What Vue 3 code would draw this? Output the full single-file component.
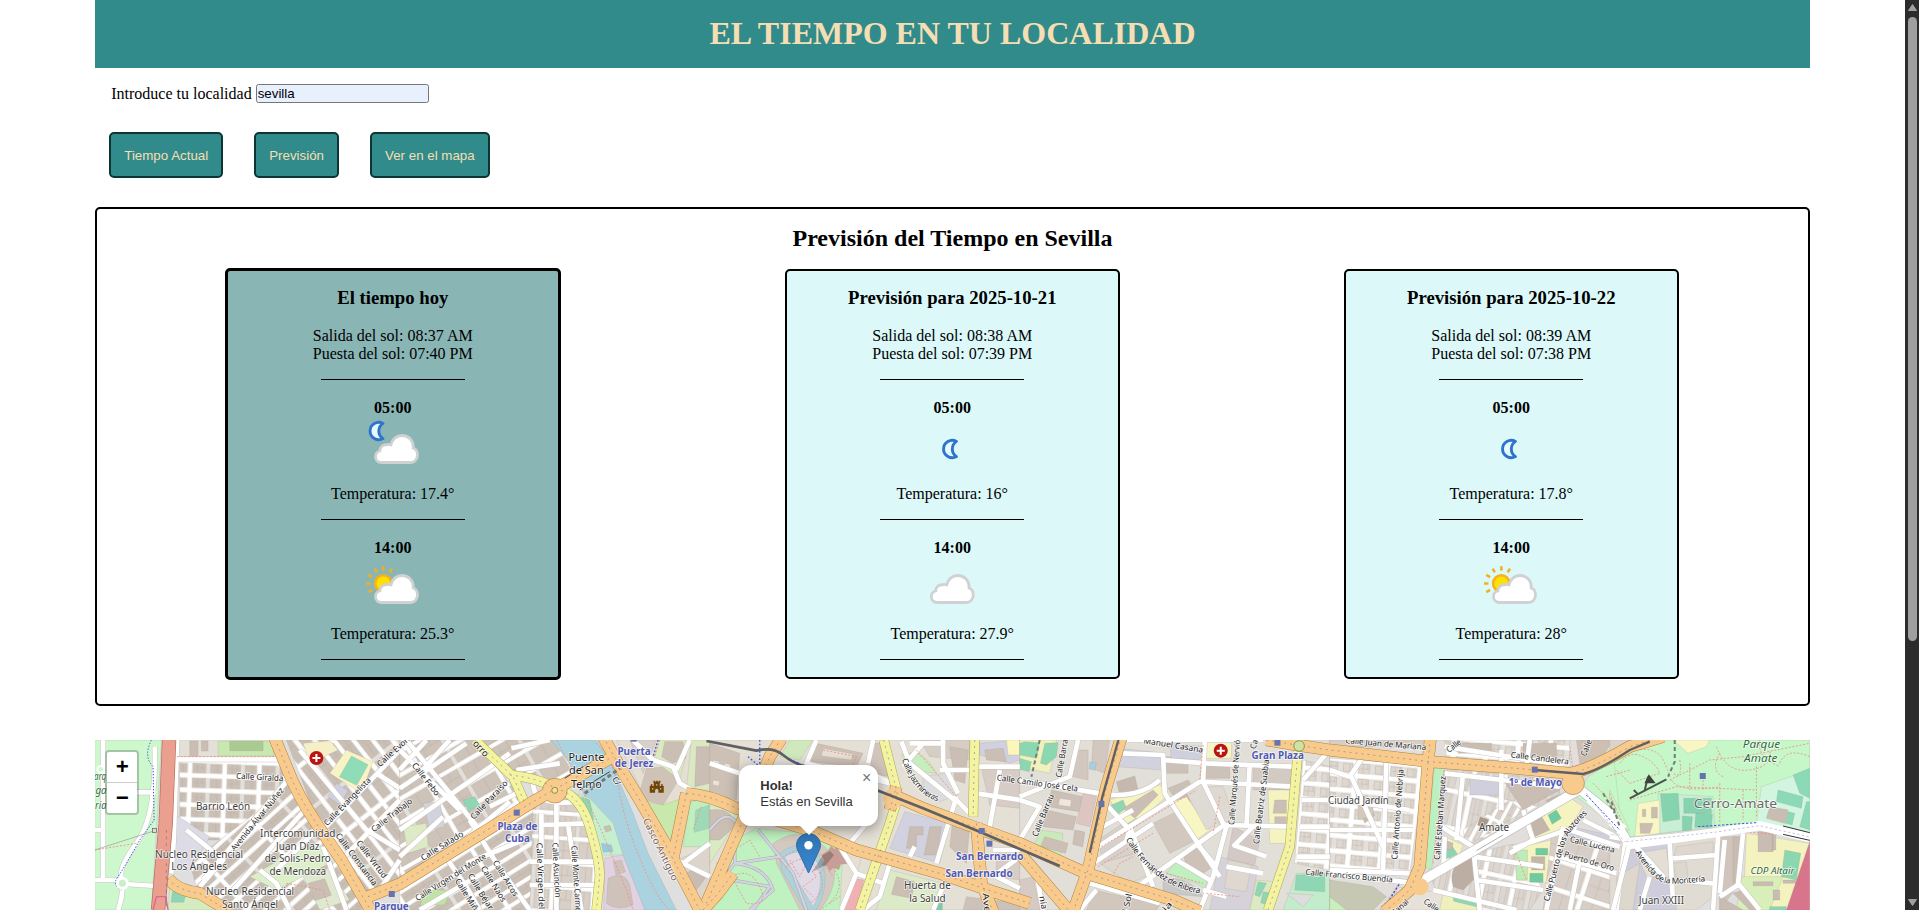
<script setup>
import { ref } from 'vue'

const city = ref('sevilla')

const days = [
  { title: 'El tiempo hoy', rise: '08:37 AM', set: '07:40 PM', today: true, hours: [
    { h: '05:00', icon: 'mooncloud', t: '17.4°' }, { h: '14:00', icon: 'suncloud', t: '25.3°' }] },
  { title: 'Previsión para 2025-10-21', rise: '08:38 AM', set: '07:39 PM', hours: [
    { h: '05:00', icon: 'moon', t: '16°' }, { h: '14:00', icon: 'cloud', t: '27.9°' }] },
  { title: 'Previsión para 2025-10-22', rise: '08:39 AM', set: '07:38 PM', hours: [
    { h: '05:00', icon: 'moon', t: '17.8°' }, { h: '14:00', icon: 'suncloud', t: '28°' }] },
]

const cloud = 'M21 45.5C16.5 45.5 14.5 42.5 14.5 39.8C14.5 37 16.3 34.6 18.8 34C19 30 22 27.5 25.5 27.8C27 27.3 29 27.5 30 27.8C31 22.5 35.5 18.5 41 18.5C47.5 18.5 52.3 23.5 52.3 30L52.2 31C55 32 56.5 34.8 56.5 38C56.5 42.3 53.5 45.5 49.5 45.5Z'
const moon = 'M22 6.4A8.7 8.7 0 1 0 22 21.6A9 9 0 0 1 22 6.4Z'

// Street block textures: id, rotation, cell width/height, street width, fill
const textures = [
  { id: 'g0', r: 2, w: 52, h: 44, s: 14, f: '#cbc0b6' },
  { id: 'g40', r: -42, w: 95, h: 40, s: 13, f: '#c9beb4' },
  { id: 'g55', r: 52, w: 120, h: 46, s: 14, f: '#cabfb5' },
  { id: 'g35', r: -30, w: 100, h: 62, s: 13, f: '#cdc3b9' },
  { id: 'g30', r: -32, w: 130, h: 42, s: 13, f: '#cbc0b6' },
  { id: 'g5', r: 4, w: 62, h: 74, s: 13, f: '#d8cfc7' },
  { id: 'g20', r: 18, w: 110, h: 84, s: 15, f: '#d7cfc7' },
  { id: 'g6', r: 5, w: 48, h: 46, s: 16, f: '#ded8d0' },
  { id: 'g-50', r: -62, w: 92, h: 28, s: 11, f: '#dcd5ce' },
  { id: 'g12', r: 12, w: 46, h: 110, s: 15, f: '#dcd6d0' },
]

// Map tiles share one coordinate space; ox is the horizontal origin of each.
const tiles = [
  { ox: 0,
    areas: [
      ['M15 30H215L200 300 185 540H15Z', '#cdf7cd'],
      ['M270 30H555L600 170 480 330 270 330Z', 'url(#g0)'],
      ['M258 30H570L585 88H258Z', '#e3e0d8'],
      ['M385 34H552V78H385Z', '#c9e8af'], ['M420 34H520V62H420Z', '#a9cb92'],
      ['M300 33h25v50h-25zM335 33h20v30h-20z', '#cabdb2'],
      ['M300 400L600 170 690 300 830 500 840 540H420L320 470Z', 'url(#g40)'],
      ['M250 250L360 320 300 420 250 420Z', '#dcdbe6'],
      ['M240 470L420 540H235Z', '#d5ecc0'], ['M248 485h42l-8 32h-38z', '#8dd5b4'],
      ['M480 440L640 350 700 350 720 400 560 480Z', '#dcefc8'],
      ['M590 30H930V460L835 500 690 290Z', 'url(#g55)'],
      ['M640 40L720 32 745 60 660 100Z', '#f5f0c8'],
      ['M770 60L850 95 815 190 720 130Z', '#f7f3c4'],
      ['M785 78l50 26-34 62-52-26z', '#8fdcb8'],
      ['M740 160l35 22-25 42-36-25z', '#cfcfe0'],
      ['M640 440l80-20 60 90-90 30z', '#dfe9d0'], ['M655 460l50-14 20 50-50 16z', '#cbbeb4'],
    ],
    minor: ['M40 30V450', 'M15 300H45', 'M15 450H90M108 462L200 468', 'M195 50Q200 260 140 340T98 450Q100 500 85 540', 'M140 187H198', 'M262 30L252 330 245 430', 'M258 88H585', 'M290 300L400 390 330 470', 'M590 155L340 450', 'M645 240L430 480', 'M510 420L560 460 600 540', 'M680 300L560 420', 'M700 350L770 540', 'M630 60L830 300 930 360', 'M930 60L700 300', 'M860 130L930 175', 'M870 480L930 390', 'M755 390L930 210'],
    dots: ['M262 80H560', 'M140 340L15 360', 'M590 460L700 480 720 540'],
    labels: [
      ['arq', 31, 150, 36, 0, 30, 'park'], ['ga', 34, 193, 34, 0, 30, 'park'], ['ria', 33, 236, 34, 0, 30, 'park'],
      ['Calle Giralda', 510, 150, 142, 3, 25], ['Barrio León', 400, 241, 163, 0, 31, 'place'],
      ['Avenida Álvar Núñez', 503, 268, 235, -51, 25], ['Intercomunidad', 624, 321, 226, 0, 31, 'place'],
      ['Juan Díaz', 624, 359, 130, 0, 31, 'place'], ['de Solis-Pedro', 624, 397, 198, 0, 31, 'place'], ['de Mendoza', 624, 434, 170, 0, 31, 'place'],
      ['Nucleo Residencial', 328, 383, 264, 0, 31, 'place'], ['Los Ángeles', 328, 421, 167, 0, 31, 'place'],
      ['Nucleo Residencial', 481, 496, 264, 0, 31, 'place'], ['Santo Ángel', 481, 533, 168, 0, 31, 'place'],
      ['Calle Evangelista', 773, 215, 190, -46, 25], ['Calle Trabajo', 906, 256, 148, -38, 25], ['Calle Evora', 914, 62, 130, -42, 25],
      ['Calle Constancia', 800, 388, 190, 53, 25], ['Calle Virtud', 846, 388, 135, 53, 25], ['Parque', 905, 541, 104, 0, 29, 'metro'],
    ] },
  { ox: 930,
    areas: [
      ['M0 30H225L380 225 0 455Z', 'url(#g35)'],
      ['M225 30H480L530 150 460 170 330 130Z', 'url(#g35)'],
      ['M0 470L400 235 590 260 600 540H0Z', 'url(#g30)'],
      ['M400 215L530 205 585 320 590 540H390Z', 'url(#g5)'],
      ['M10 290L80 280 85 350 25 370Z', '#dcebc5'], ['M70 220L120 215 135 290 90 300Z', '#d2d1de'],
      ['M190 210l35-10 15 25-35 20z', '#8fd7b4'], ['M80 480h75l-20 45H60z', '#bfe3a6'],
      ['M455 30H590L640 110 700 250 745 370 830 540H735L670 380 640 290 560 210 510 100Z', '#aad3df'],
      ['M535 190L570 205 640 280 670 375 600 375Z', '#c6efd0'], ['M545 200l25 10 12 60-20-15z', '#8fd7b4'], ['M605 340l30 5 5 20-30 2z', '#9bc9dc'], ['M612 290l18-4 6 15-18 6z', '#cabdb2'],
      ['M615 385L670 375 735 540H612Z', '#e0d2e2'], ['M625 445q50-25 65 20l10 60q-50 20-80-5z', '#cec2bb'], ['M640 395l25-5 12 35-28 10z', '#cec2bb'],
      ['M650 30H930V540H900L820 370Z', '#e4ded3'],
      ['M715 205L740 115 810 110 830 160 790 225Z', '#cfc3b8'], ['M725 215L790 225 860 200 805 345Z', '#c8e9ab'],
      ['M690 30H770L730 130Z', '#d8d0cb'], ['M775 30H870L840 150 760 90Z', '#d9e9c0'], ['M795 35h55l8 50-40 15-32-20z', '#cbbeb4'],
      ['M875 30H930V180H860Z', '#dbe8c2'], ['M890 50H930V160L885 170Z', '#cbbeb4'],
      ['M870 215L930 205V350H850Z', '#bfeebf'], ['M888 240l40-15v70l-45 12z', '#a0d9b8'],
      ['M830 390L930 350V500L890 530Z', '#ddd5cc'], ['M860 430q40-30 60 10l-30 40z', '#c9bcb2'],
    ],
    minor: ['M0 60L180 240', 'M20 30L240 300', 'M80 30L0 120', 'M150 30L60 130', 'M0 300L330 70', 'M110 400L330 215', 'M210 270L290 400 390 540', 'M130 370L200 470 240 540', 'M0 380L130 260', 'M270 230L350 190', 'M350 120L480 100', 'M400 160Q400 230 530 215', 'M335 55L450 30', 'M425 250V540', 'M470 190V540', 'M425 285L560 280', 'M505 285L545 540', 'M390 395H590M390 465H590', 'M200 400L370 330', 'M60 540L300 400', 'M700 30L760 90 820 110 840 160 930 210', 'M870 30L830 120', 'M820 385L930 440', 'M850 400L930 340', 'M0 175L200 40'],
    dots: ['M470 30L530 140 600 290 680 480 700 540', 'M590 40Q640 80 660 190T740 430T830 540', 'M780 30L765 80', 'M905 230L880 300'],
    labels: [
      ['Calle Febo', 78, 148, 118, 52, 25], ['Calle Paraíso', 268, 210, 150, -47, 25], ['Calle Salado', 127, 348, 145, -32, 25],
      ['orro', 243, 56, 55, 47, 29], ['Calle Virgen del Monte', 153, 442, 245, -32, 25], ['Calle Arcos', 317, 445, 122, 58, 25], ['Calle Naos', 281, 462, 122, 58, 25], ['Calle Béjar', 242, 485, 122, 58, 25], ['Calle Miño', 204, 500, 122, 58, 25],
      ['Calle Virgen del', 422, 438, 200, 88, 25], ['Calle Asunción', 470, 420, 165, 87, 25], ['Calle Monte Carmelo', 530, 455, 215, 86, 25],
      ['Puente', 560, 92, 108, 0, 34, 'dark'], ['de San', 560, 132, 104, 0, 34, 'dark'], ['Telmo', 560, 173, 92, 0, 34, 'dark'],
      ['Puerta', 703, 75, 100, 0, 29, 'metro'], ['de Jerez', 703, 110, 116, 0, 29, 'metro'], ['Plaza de', 353, 300, 120, 0, 29, 'metro'], ['Cuba', 353, 335, 74, 0, 29, 'metro'],
      ['Casco Antiguo', 782, 358, 205, 64, 29, 'district'], ['C/', 650, 153, 25, 60, 25],
    ] },
  { ox: 1860,
    areas: [
      ['M0 30H930V540H0Z', '#e5e0d6'],
      ['M0 40L90 70 80 210 0 190Z', '#cdc1b6'], ['M10 90l20 5-3 18-18-4zM45 100l18 4-3 18-18-4zM10 150l20 4-3 14-18-4z', '#ebe3da'],
      ['M240 30L310 30 270 90 210 80Z', '#cfe8bc'], ['M320 40L460 70 440 110 300 95Z', '#cdc0b5'], ['M340 55L430 72 425 90 335 78Z', '#e7dfd5'],
      ['M0 220L90 255 40 340 0 400Z', '#d9eac5'],
      ['M75 330L140 295 290 310 400 360 390 540H0V480Z', '#bff2c0'],
      ['M0 240Q70 230 75 290L30 330 0 330Z', '#cbbeb3'],
      ['M190 340Q290 270 370 380 390 470 330 540H270L200 400Z', '#d3c9c1'],
      ['M210 370Q290 310 340 400 360 470 320 540H285L215 420Z', '#aed2d9'],
      ['M225 380Q280 345 325 400 345 470 310 530L250 430Z', '#dfdae6'],
      ['M335 375l20-12 8-14 12 8 18-12 4 18 14 8-6 14 6 16-18 2-6 16-16-6-12 10-6-14-16-4 8-14z', '#c79f98'],
      ['M410 330l50 30-15 60-30-20z', '#e6dfd2'], ['M430 445L462 450 440 540H398Z', '#f1b0b4'],
      ['M575 75Q640 50 680 130L600 120Z', '#c5edbd'], ['M640 140L710 130 745 195 690 215 640 190Z', '#dcdcdc'],
      ['M490 40h30l20 100-60-10z', '#d1c5bb'], ['M585 245L720 280 690 400 540 355Z', '#d2d1df'], ['M600 290h40v25h-20v40h-30z', '#cabdb3'], ['M660 290h35l-12 85h-40z', '#cabdb3'],
      ['M630 30H780V90L660 80Z', '#d6cdc4'], ['M720 50L775 60 765 160 735 150Z', '#cbbfb5'],
      ['M805 40L930 30V90L900 100 810 75Z', '#d0d0e0'], ['M825 60L880 55 890 95 830 90Z', '#cbbfb5'], ['M890 30H930V75H895Z', '#fbf6b9'],
      ['M815 115L930 120V235L840 225Z', '#d7cdc6'],
      ['M730 260L780 290 770 400 720 350Z', '#cdc1b7'], ['M540 420L700 460 680 540H500Z', '#dceac8'], ['M560 440l55 15-10 50-60-12z', '#cbbeb3'], ['M670 520h28v20h-32z', '#7dcca5'],
      ['M860 360L930 380V450L860 440Z', '#d7cdc5'], ['M770 500L930 520V540H760Z', '#cdc2b9'],
    ],
    minor: ['M320 30L290 100 540 160', 'M490 30L475 100', 'M480 130L560 165', 'M580 110L640 40', 'M575 35L600 100 740 215', 'M690 120H800', 'M740 200L680 400', 'M730 200L780 250', 'M800 110H930', 'M870 120L840 290', 'M800 190L930 210', 'M390 350L440 430 520 460', 'M440 430L395 540', 'M480 270L420 340', 'M700 470L670 540', 'M600 40H700', 'M615 350L600 380', 'M850 360H930', 'M850 440L930 380', 'M860 440L930 475', 'M540 400L510 500 460 540', 'M700 30V100L745 190', 'M0 100L90 130'],
    path: ['M75 330L75 400 0 500', 'M75 400L210 380', 'M145 300L250 430 290 540', 'M10 440L180 470 130 540', 'M75 400Q170 410 190 480L120 540', 'M0 300Q60 220 90 300'],
    dots: ['M65 440Q120 410 150 470T110 520Z', 'M210 390Q290 320 360 400T330 540', 'M230 410Q290 360 325 420T300 520', 'M340 60L440 80 430 105', 'M620 60L740 200', 'M360 520L390 500', 'M240 390L270 440 290 400 320 440 280 470 310 500', 'M90 350L120 330 150 380', 'M330 430L350 410 370 440', 'M20 400L60 360'],
    labels: [
      ['San Bernardo', 840, 390, 202, 0, 29, 'metro'], ['San Bernardo', 808, 442, 202, 0, 29, 'metro'], ['Huerta de', 653, 477, 140, 0, 31, 'place'], ['la Salud', 653, 515, 109, 0, 31, 'place'],
      ['Calle Camilo José Cela', 983, 168, 245, 8, 25], ['Ave', 830, 518, 58, 84, 27],
    ] },
  { ox: 2790,
    areas: [
      ['M0 30H930V540H0Z', '#e2dfd8'],
      ['M0 30H110L90 130 0 110Z', '#f1f1bd'], ['M15 35L60 38 50 85 0 75V40ZM75 40L115 38 110 80 80 105 62 100ZM0 85L35 95 28 125 0 118Z', '#8bd7b2'],
      ['M165 60h40v90l-45-10zM220 30h50l-15 100-40-15z', '#d3c8bf'], ['M210 95l20 4-4 22-18-4z', '#a8cfe0'],
      ['M300 55L430 70V120L290 110Z', '#d2d2de'], ['M290 155L345 138 355 180 300 195Z', '#c5b8ae'],
      ['M95 180L190 200 180 245 85 230Z', '#ccbfb5'], ['M120 205l35 5-3 20-36-5z', '#efe7dc'],
      ['M80 240L170 260 160 300 70 290Z', '#ccbfb5'], ['M65 300L130 310 120 400 40 350Z', '#cbeabb'], ['M190 190L230 200 210 290 170 280Z', '#ddc6c2'], ['M75 320l70 20-8 30-75-20z', '#ccbfb5'], ['M165 300l30 6-6 45-30-8z', '#cbbfb6'],
      ['M270 210L420 165 450 190 330 300Z', '#f5f3bf'], ['M275 225l35-15 10 25-30 20zM325 280l25-15 8 15-28 20z', '#8fd7b4'], ['M310 235l90-55 15 15-70 70z', '#cbbfb5'], ['M440 80h65v50h-65zM560 105h70v40h-70z', '#cdc2b9'], ['M445 175l60-25 30 45-50 40z', '#cbc0b8'],
      ['M460 215L500 200 570 300 530 330Z', '#f8f6c3'], ['M500 190L545 160 600 200 605 270 560 300Z', '#dedbd5'], ['M560 30H635V85H560Z', '#f5f4c4'],
      ['M450 40L550 50V90L455 85Z', '#ced0de'],
      ['M400 280L470 245 530 330 450 370Z', '#d2c8bf'], ['M235 330L310 280 340 370 250 400Z', '#d8d0ca'], ['M240 400L350 370 420 420 330 460Z', '#ddd8d0'],
      ['M440 430L480 385 520 420 565 440 555 475 530 460Z', '#bff0bf'], ['M490 370L520 345 580 410 550 430 500 410Z', '#cdc1b8'],
      ['M430 450Q500 430 550 500L430 490Z', '#c8c8c8'],
      ['M565 170H610L640 260 600 290Z', '#dfd9d3'], ['M640 290L720 330 700 430 620 400Z', '#d3cac6'], ['M600 380L715 410 690 540H570Z', '#d6d2da'], ['M625 390l70 15-15 80-65-10z', '#dfd8d1'],
      ['M700 110H820V180H700Z', '#d2cac3'], ['M745 180H825L810 340H750Z', '#f5f3bf'], ['M765 210h35v40h-40zM765 260h35v25h-35z', '#cbbfb5'],
      ['M710 450L760 455 740 540H690Z', '#dceac4'], ['M715 455l25 5-20 40-15-5zM730 485l28 4-10 36-25-6z', '#8fd7b4'],
      ['M850 90L930 110V420L825 400Z', 'url(#g6)'], ['M830 430H930V540H790Z', '#c2eccb'], ['M830 435L915 432V485L825 480Z', '#8fd7b4'], ['M800 490L880 495 850 530Z', '#ddd'],
      ['M0 450L40 440 60 540H0Z', '#d5cbc4'], ['M225 480L420 525 410 540H200Z', '#d2c7bd'],
    ],
    minor: ['M175 30L150 140 0 200', 'M0 150L240 190', 'M310 70L430 75 435 190 600 440', 'M320 30H730', 'M430 90L560 100 820 110', 'M240 190Q350 210 420 150', 'M265 230L330 300 320 330', 'M235 350L540 155 820 170', 'M555 30L550 155 610 280', 'M690 100L680 290', 'M610 285L820 290', 'M620 280L340 480', 'M620 290L580 440 540 540', 'M230 300L340 240', 'M530 340L590 410', 'M640 345L740 380', 'M700 290L640 350', 'M470 390L570 450', 'M0 210L60 230 0 330', 'M50 430L70 540', 'M330 290L400 470', 'M210 460L420 520', 'M230 480L180 540', 'M840 290H930', 'M845 210H930', 'M850 150L930 60', 'M830 380H930', 'M220 400L400 280', 'M620 410L730 430', 'M550 480L620 500'],
    dots: ['M235 410L400 310', 'M245 350L530 180', 'M275 440L300 400 340 380', 'M440 430L550 460', 'M600 200L580 310', 'M550 45L540 150', 'M560 490L660 500'],
    labels: [
      ['Manuel Casana', 461, 54, 180, 9, 25], ['Calle Barrau', 128, 78, 130, -80, 25], ['Calle Barrau', 70, 256, 135, -68, 25],
      ['Calle Marqués de Nervión', 645, 150, 270, -86, 25], ['Ca', 703, 43, 28, -75, 25], ['Calle Beatriz de Suabia', 725, 215, 255, -83, 25], ['Gran Plaza', 774, 87, 157, 0, 29, 'metro'],
      ['Calle Francisco Buendía', 988, 446, 262, 5, 25], ['l Sol', 323, 518, 55, -78, 25], ['ia', 443, 530, 30, -50, 25], ['nia', 70, 518, 40, 80, 25],
    ] },
  { ox: 3720,
    areas: [
      ['M0 30H900V540H0Z', '#e1dedb'],
      ['M0 85L285 105 240 430 0 420Z', 'url(#g6)'], ['M0 30H290V50H0Z', '#d6cdc5'],
      ['M345 30H720V130L350 90Z', 'url(#g6)'], ['M385 40h100v30h-100zM580 40h100v40h-100z', '#c9bcb1'],
      ['M315 100L345 100 305 420 285 410Z', '#bdf0c0'],
      ['M350 115L690 150 690 190 420 350 330 290Z', 'url(#g12)'], ['M420 140h90v55h-90z', '#cfcfdd'],
      ['M520 150L650 150 690 180 580 240Z', '#cabdb3'],
      ['M400 300L540 210 580 245 410 350Z', 'url(#g-50)'], ['M452 260l25 10-12 25-22-10z', '#a99c8c'],
      ['M90 230l25-5 20 30-30 25z', '#c9bcb0'], ['M85 225h45v40H85z', '#d4c9bb'],
      ['M330 390L345 320 400 345 380 400Z', '#f5f3bf'], ['M335 350l28-8 20 30-35 18z', '#8dd5b2'], ['M345 330l25 10-5 22-22-10z', '#c9bcb0'],
      ['M300 440Q370 380 430 370L560 340 640 480 600 540H440L320 480Z', 'url(#g12)'],
      ['M370 470Q350 400 430 370L440 440 400 480Z', '#bcaea3'],
      ['M590 260L700 190 760 230 720 290 600 340Z', '#f5f3bf'], ['M655 255l25-15 15 25-28 18z', '#6fcba0'], ['M600 265l30-15 30 50-45 20z', '#c4b6aa'], ['M650 210l45-18 12 25-45 20z', '#c4b6aa'],
      ['M555 355L665 330 655 460 560 450Z', '#f5f3bf'], ['M555 360h38v90h-32z', '#bdecb8'], ['M618 355h36v20h-36zM600 430h40v27h-40z', '#6fcba0'], ['M605 380h40v40h-40z', '#c4b6aa'],
      ['M665 320L860 340 850 540H640Z', 'url(#g20)'], ['M720 290L870 320V345L700 315Z', '#d0cfdc'],
      ['M775 140L900 60V300H870L740 200Z', '#c6f7c8'],
      ['M0 450L130 470 170 500 130 540H0Z', '#c7c8b4'], ['M0 500L50 540H0Z', '#c8efbc'],
      ['M310 480L450 510 440 540H330Z', '#f0f0bd'], ['M370 500l80 12-4 20-74-18z', '#8fd7b4'], ['M740 30H850L800 110 750 100Z', '#cdbfb2'],
      ['M200 470L340 490 330 540H200Z', '#e7e2d9'],
    ],
    minor: ['M0 120L60 140 100 80', 'M0 205L240 240', 'M60 130L160 350', 'M170 90L160 420', 'M0 300H250', 'M0 420L240 430', 'M0 430L260 460', 'M345 50L700 105', 'M515 60V240', 'M345 130L690 170', 'M320 280L430 350 450 540', 'M345 320L340 430', 'M400 130L380 330', 'M550 355L740 290', 'M580 240L610 330 540 370', 'M720 300L870 350', 'M700 290L650 540', 'M890 310L860 540', 'M360 390L300 430', 'M430 380L640 410', 'M440 450L640 480', 'M310 480L560 540', 'M690 380L860 430', 'M750 390L720 540', 'M760 270L880 330', 'M600 30L590 110'],
    dots: ['M150 540L210 460', 'M345 110L310 400', 'M770 180L880 300', 'M790 160L830 200 870 280', 'M830 140L900 120', 'M840 190L860 240', 'M560 370L590 450', 'M720 50L730 120'],
    labels: [
      ['Calle Juan de Mariana', 168, 50, 243, 5, 25], ['Calle Candelera', 630, 93, 175, 7, 25], ['Calle', 372, 48, 48, -38, 25], ['Calle', 770, 54, 50, -68, 25],
      ['Ciudad Jardín', 86, 221, 182, 0, 31, 'place'], ['Calle Antonio de Nebrija', 204, 253, 272, -86, 25], ['Calle Esteban Marquez', 331, 264, 252, -86, 25],
      ['1º de Mayo', 617, 168, 160, 0, 29, 'metro'], ['Amate', 493, 303, 90, 0, 32, 'place'],
      ['Calle Lucena', 788, 352, 137, 14, 25], ['Puerto de Oro', 778, 402, 155, 16, 25], ['Canal', 211, 532, 60, -42, 25], ['Calle', 305, 526, 50, 35, 25],
    ] },
  { ox: 4560,
    areas: [
      ['M60 30H600V320L440 280 60 320 30 250 10 60Z', '#c6f7c8'], ['M0 30H60L30 70 0 90Z', '#dcd3cb'], ['M0 180L60 300H0Z', '#c6f7c8'],
      ['M190 30H300L290 50 235 70Z', '#f8f6c5'],
      ['M455 170L600 120V320L440 280Z', '#d2f5df'], ['M550 135L600 115V205L570 190Z', '#8bd9b6'], ['M505 180L580 200 575 235 500 215ZM590 215H600V300L570 290ZM535 245l20 5-8 35-20-5z', '#8bd9b6'], ['M480 230L535 240 525 280 470 265Z', '#c9bcb3'],
      ['M145 190L310 200 315 290 150 310Z', '#c8efd5'], ['M152 192L205 190 210 268 160 275ZM222 205H305V250H222ZM218 258L248 260 245 300 218 302ZM258 250L308 252 305 292 255 292Z', '#86d3b0'],
      ['M85 220L150 210 150 310 75 320Z', '#f8f6c5'], ['M98 238h10v22h-10zM125 232h18v32h-18zM90 280h40l-10 30H92z', '#cbbeb1'],
      ['M60 350L320 320 310 500 260 540H0V350Z', '#e1dcd3'], ['M60 360L110 350 180 335 200 540H20Z', '#cfcddb'],
      ['M80 370L170 355 180 440 110 440Z', '#e4dfd5'], ['M200 350L310 335V380L190 385ZM190 400L230 395 235 450 200 450ZM20 440L90 400 70 540H20Z', '#ddd7ce'],
      ['M330 320H400L390 460 330 540Z', '#d0c4bb'], ['M370 320H395L390 440 370 460Z', '#c8bbb1'],
      ['M410 310L600 340 540 540H400Z', '#f4f3bf'], ['M445 305h45v60h-45zM488 315h10v45h-10z', '#c9bcb2'], ['M525 360L573 370 560 450 515 440Z', '#8bd7b2'], ['M395 440L520 440 480 540H380Z', '#d9efba'], ['M430 455h60v12h-60zM520 450h38v10h-38zM490 480h20v30h-20z', '#c9bcb2'], ['M480 530h50v10h-50z', '#8bd7b2'],
      ['M600 335V540H530Z', '#d7758c'], ['M330 500L400 540H330Z', '#c9bcb2'],
      ['M370 490L400 480 450 540H420Z', '#c9bcb2'],
    ],
    minor: ['M0 320L60 330 330 305 450 285 600 320', 'M60 340L10 540', 'M70 340L170 450', 'M325 320L310 540', 'M345 330L330 490', 'M400 310L385 460 450 540', 'M385 465L330 500', 'M180 340L190 520', 'M190 385L320 375', 'M310 460L200 450', 'M0 280L60 330', 'M120 440L90 540'],
    dots: ['M30 100Q60 60 100 80T150 130L60 160 20 120', 'M80 60Q140 50 160 90T180 140', 'M180 150L300 90 400 80 600 40', 'M60 210L200 170 440 180', 'M240 100V180M280 150V180M330 160V280M400 180V270M440 110V260', 'M320 50Q350 130 420 120T480 60', 'M450 30Q440 80 510 110', 'M510 100Q530 50 600 80', 'M185 150Q210 190 330 170', 'M210 90Q220 150 190 130', 'M70 330L330 300 600 320', 'M40 280L0 200', 'M340 140Q300 120 330 70'],
    labels: [
      ['Parque', 455, 53, 112, 0, 33, 'park'], ['Amate', 453, 95, 100, 0, 33, 'park'], ['Cerro-Amate', 377, 233, 250, 0, 40, 'grey'],
      ['CDP Altair', 488, 431, 132, 0, 29, 'park'], ['Juan XXIII', 155, 523, 136, 0, 31, 'place'],
    ] },
]

const curves = [
  { id: 'c1', d: 'M2436 88Q2480 210 2562 216', t: 'Calle Jazmineras', l: 172 },
  { id: 'c2', d: 'M3108 328Q3190 470 3340 492', t: 'Calle Fernández de Ribera', l: 285 },
  { id: 'c3', d: 'M4636 368Q4690 450 4722 458T4856 452', t: 'Avenida de la Montería', l: 252 },
  { id: 'c4', d: 'M4378 515L4422 350Q4435 300 4500 246', t: 'Calle Puerto de los Alazores', l: 294 },
]

const yellow = ['M1155 30L1270 140 1308 225', 'M1260 135Q1350 145 1395 175Q1470 190 1500 290T1530 440L1520 540', 'M2382 30L2425 200 2400 280 2310 540', 'M2655 30L2650 260', 'M3625 60L3600 350 3535 540']
const orange = [
  'M555 25L590 110Q620 190 680 280L755 390 845 545', 'M235 445Q260 480 330 490L420 545', 'M835 500L930 462 1330 215 1395 178 1570 80',
  'M1540 20L1590 110 1650 210 1720 330 1830 540', 'M1840 540L1885 490 1930 430', 'M1790 190L1750 385', 'M1790 190Q1860 195 1940 235L2160 300 2300 360 2550 430 2710 485 2820 520',
  'M2075 25L2040 80 1955 280 1850 520', 'M2400 190L2500 235 2650 290 2790 340 2990 430 3250 510 3330 545', 'M2400 240L2420 170M2660 280L2675 460 2710 545', 'M2790 370L2940 545',
  'M3095 20L3050 170 2995 420 2950 545', 'M3530 30L3620 45 3720 60 4020 95 4280 115 4440 130Q4500 120 4620 50L4720 20', 'M4022 25L4015 95 3990 410 3960 480 3885 545',
]
const rail = 'M1850 33L2000 62Q2050 50 2080 75T2150 110L2360 180 2500 235 2680 310 2910 408'
</script>

<template>
  <div class="window">
    <div class="page">
      <main class="container">
        <header><h1>EL TIEMPO EN TU LOCALIDAD</h1></header>
        <form class="search" @submit.prevent>
          <label for="city">Introduce tu localidad</label>
          <input id="city" v-model="city" type="text">
        </form>
        <div class="actions">
          <button>Tiempo Actual</button>
          <button>Previsión</button>
          <button>Ver en el mapa</button>
        </div>
        <section class="forecast">
          <h2>Previsión del Tiempo en Sevilla</h2>
          <div class="cards">
            <article v-for="d in days" :key="d.title" class="card" :class="{ today: d.today }">
              <h3>{{ d.title }}</h3>
              <p>Salida del sol: {{ d.rise }}<br>Puesta del sol: {{ d.set }}</p>
              <div class="rule"></div>
              <div v-for="h in d.hours" :key="h.h" class="hour">
                <strong>{{ h.h }}</strong>
                <svg class="icon" viewBox="0 0 64 64">
                  <path v-if="h.icon === 'moon'" class="moon" transform="translate(14.5 18)" :d="moon" />
                  <path v-if="h.icon === 'mooncloud'" class="moon" :d="moon" />
                  <g v-if="h.icon === 'suncloud'">
                    <circle cx="22.3" cy="26.5" r="8.2" fill="#ffe000" stroke="#f5b21a" stroke-width="2.6" />
                    <path v-for="a in [-120, -90, -60, -30, 0, 30]" :key="a" d="M22.3 9.2v4.4" :transform="`rotate(${a} 22.3 26.5)`" stroke="#efb022" stroke-width="2.5" />
                  </g>
                  <path v-if="h.icon !== 'moon'" class="cloud" :transform="h.icon === 'cloud' ? 'translate(-3.2 0)' : null" :d="cloud" />
                </svg>
                <span>Temperatura: {{ h.t }}</span>
                <div class="rule"></div>
              </div>
            </article>
          </div>
        </section>
        <section class="map">
          <svg class="streets" viewBox="15.75 30 5143.5 510" preserveAspectRatio="none">
            <defs>
              <pattern v-for="p in textures" :id="p.id" :key="p.id" :width="p.w * 2" :height="p.h" patternUnits="userSpaceOnUse" :patternTransform="`rotate(${p.r})`">
                <rect :width="p.w * 2" :height="p.h" fill="#e3dfda" />
                <rect x="2" y="2" :width="p.w - p.s" :height="p.h - p.s - 2" :fill="p.f" stroke="#bcb0a5" stroke-width="1.3" />
                <rect :x="p.w + 3" y="3" :width="p.w - p.s - 6" :height="p.h - p.s - 5" :fill="p.f" stroke="#bcb0a5" stroke-width="1.3" />
                <path :d="`M${p.w * .3} 2v${p.h - p.s - 2}M${p.w * .58} 2v${(p.h - p.s) / 2}M${p.w * 1.45} 4v${p.h - p.s - 5}M4 ${(p.h - p.s) / 2}h${p.w - p.s - 4}`" stroke="#b8aba0" stroke-width="1.2" />
                <path :d="`M0 ${p.h - p.s / 2}H${p.w * 2}M${p.w * 2 - p.s / 2} 0V${p.h}`" stroke="#fff" :stroke-width="p.s * .85" />
              </pattern>
            </defs>
            <rect x="15" y="30" width="5150" height="510" fill="#e0dfdf" />
            <g v-for="t in tiles" :key="'a' + t.ox" :transform="`translate(${t.ox})`">
              <path v-for="(a, i) in t.areas" :key="i" :d="a[0]" :fill="a[1]" stroke="#9a9083" stroke-opacity=".4" stroke-width="1.5" />
            </g>
            <g v-for="t in tiles" :key="'m' + t.ox" :transform="`translate(${t.ox})`" class="line">
              <path :d="t.minor.join('')" stroke="#c8c4c0" stroke-width="17" />
              <path :d="t.minor.join('')" stroke="#fff" stroke-width="14" />
              <path v-if="t.path" :d="t.path.join('')" stroke="#a7a7b4" stroke-width="10" />
              <path v-if="t.path" :d="t.path.join('')" stroke="#d4d4e0" stroke-width="7" />
              <path :d="t.dots.join('')" stroke="#ef8d86" stroke-width="2.6" stroke-dasharray="6 5" />
            </g>
            <g class="line">
              <path d="M3980 462L4470 178 4560 250 4610 330" stroke="#bbb" stroke-width="31" />
              <path d="M3980 462L4470 178 4560 250 4610 330" stroke="#fff" stroke-width="27" />
              <path d="M4160 362L4240 315" stroke="#888" stroke-width="2" />
              <path d="M4500 205L4600 300M4610 345L4880 308 5010 287 5160 323" stroke="#fff" stroke-width="28" />
              <path d="M4610 335L4880 306 5010 287 5160 321M4490 190L4600 330" stroke="#a9a4ce" stroke-width="2" stroke-dasharray="7 7" />
              <path d="M4490 195L4590 300M4825 290L5000 278" stroke="#3d52df" stroke-width="3" stroke-dasharray="7 5" />
              <path d="M5080 288L5160 308M5080 313L5160 331" stroke="#333" stroke-width="3" />
              <path d="M3880 540L3930 460" stroke="#3d52df" stroke-width="4" stroke-dasharray="7 5" />
              <path d="M185 30Q160 80 190 110L193 270 150 330 110 400 85 440Q65 465 95 480" stroke="#3b49e8" stroke-width="3" stroke-dasharray="4 5" />
              <path d="M15 360L195 302" stroke="#999" stroke-width="2" />
              <path :d="yellow.join('')" stroke="#a9a959" stroke-width="30" />
              <path :d="yellow.join('')" stroke="#f3f3a0" stroke-width="27" />
              <path :d="orange.join('')" stroke="#b08440" stroke-width="37" />
              <circle cx="1395" cy="182" r="37" fill="#f8ca8c" stroke="#b08440" stroke-width="2" />
              <circle cx="4450" cy="160" r="34" fill="#f8ca8c" stroke="#b08440" stroke-width="2" />
              <circle cx="2410" cy="205" r="30" fill="#f8ca8c" />
              <circle cx="3990" cy="470" r="26" fill="#f8ca8c" />
              <path :d="orange.join('')" stroke="#f8ca8c" stroke-width="34" />
              <path :d="orange.concat(yellow).join('')" stroke="#8c7d92" stroke-width="2" stroke-dasharray="6 12" />
              <path d="M238 30L228 280 205 540" stroke="#b16e60" stroke-width="43" />
              <path d="M238 30L228 280 205 540" stroke="#eb9f8e" stroke-width="39" />
              <path d="M190 540L200 500 228 500 235 540" stroke="#d86a92" stroke-width="4" />
              <path d="M230 300V530" stroke="#8d6b6b" stroke-width="2" stroke-dasharray="8 12" />
              <path :d="rail" stroke="#5f6063" stroke-width="8" />
              <path d="M3086 30L3038 200 3000 368M4335 120L4480 132Q4530 120 4620 60L4680 35" stroke="#606063" stroke-width="7" />
              <path d="M1425 145L1480 110M1470 180L1560 125" stroke="#444" stroke-width="3" />
              <path d="M1485 190L1590 115" stroke="#777" stroke-width="9" stroke-dasharray="12 9" />
              <path d="M2850 30L2825 140M4755 30V95L4735 140M4565 215L4590 290M4540 190L4575 250" stroke="#6f7f75" stroke-width="6" stroke-dasharray="12 9" />
              <path d="M4620 205L4730 148M4665 180L4675 140M4645 193L4632 180" stroke="#4e514c" stroke-width="6" />
              <path d="M4664 160L4677 133 4698 160Z" fill="#3d423c" />
              <path d="M2010 30V110L1975 80M2100 90L2130 100M1705 30L1690 80" stroke="#4254e0" stroke-width="4" stroke-dasharray="5 6" />
            </g>
            <circle cx="98" cy="460" r="15" fill="#c9efc9" stroke="#fff" stroke-width="9" />
            <circle cx="33" cy="118" r="10" fill="#cdf7cd" stroke="#fff" stroke-width="6" />
            <rect x="188" y="295" width="12" height="12" fill="#ddd" stroke="#555" stroke-width="2" />
            <circle cx="1395" cy="181" r="9" fill="#eee39b" stroke="#98893a" stroke-width="3" />
            <circle cx="3628" cy="48" r="16" fill="#cfe2a4" stroke="#8a9850" stroke-width="3" />
            <g v-for="m in [[906, 492], [1281, 248], [1632, 26], [2676, 303], [2699, 341], [3035, 222], [3563, 38], [4335, 119], [4839, 138]]" :key="m[0]">
              <rect :x="m[0] - 9" :y="m[1] - 9" width="18" height="18" fill="#6673ad" />
            </g>
            <g v-for="m in [[680, 84], [3393, 62]]" :key="m[0]" :transform="`translate(${m[0]} ${m[1]})`">
              <circle r="21" fill="#bb1410" /><path d="M-12 0H12M0-12V12" stroke="#fff" stroke-width="6" />
            </g>
            <path transform="translate(1680 152)" d="M0 36V16h3v-5h5v5h4V6h-1V0h5v3h3V0h5v3h3V0h5v6h-2v10h4v-5h5v5h3v20H26v-8q-5-7-10 0v8Z" fill="#704606" />
            <path d="M1689 174v5M1713 174v5M1701 162v5" stroke="#cfc3b8" stroke-width="3" />
            <g v-for="t in tiles" :key="'l' + t.ox" :transform="`translate(${t.ox})`" class="labels">
              <text v-for="(l, i) in t.labels" :key="i" :class="l[6]" :x="l[4] ? 0 : l[1]" :y="l[4] ? l[5] * .32 : l[2]" :font-size="l[5]" :textLength="l[3]" lengthAdjust="spacingAndGlyphs" :transform="l[4] ? `translate(${l[1]} ${l[2] - (Math.abs(l[4]) < 20 ? 8 : 0)}) rotate(${l[4]})` : null">{{ l[0] }}</text>
            </g>
            <g class="labels curved">
              <template v-for="c in curves" :key="c.id">
                <path :id="c.id" :d="c.d" fill="none" />
                <text font-size="25" :textLength="c.l"><textPath :href="'#' + c.id">{{ c.t }}</textPath></text>
              </template>
            </g>
          </svg>
          <div class="zoom"><span>+</span><span>−</span></div>
          <svg class="pin" viewBox="0 0 25 41">
            <defs><linearGradient id="pinfill" x2="0" y2="1"><stop stop-color="#2e74b4" /><stop offset="1" stop-color="#3a87d2" /></linearGradient></defs>
            <path d="M16 39L27 22 34 18 38 22 30 32Z" fill="#000" opacity=".22" />
            <path d="M12.5.5C5.6.5.5 5.8.5 12.2c0 3 1.500 5.600 2.700 8.100L12.500 40l9.300-19.700c1.200-2.500 2.700-5.100 2.700-8.100C24.500 5.800 19.400.5 12.500.5Z" fill="url(#pinfill)" stroke="#2e6c9f" />
            <circle cx="12.500" cy="12.300" r="4.200" fill="#fff" />
          </svg>
          <div class="popup"><b>Hola!</b><br>Estás en Sevilla<span class="close">×</span></div>
        </section>
      </main>
    </div>
    <aside class="scrollbar">
      <svg viewBox="0 0 9 7"><path d="M4.500 0.500L8.500 6.500H.5Z" /></svg>
      <div class="thumb"></div>
      <svg class="down" viewBox="0 0 9 7"><path d="M4.500 6.500L8.500 .5H.5Z" /></svg>
    </aside>
  </div>
</template>

<style>
html, body { margin: 0; overflow: hidden; background: #fff; }
</style>

<style scoped>
* { box-sizing: border-box; }
.window { display: flex; height: 910px; overflow: hidden; font: 16px/18px "Liberation Serif", serif; color: #000; }
.page { width: 1905px; height: 910px; overflow: hidden; }
.container { width: 90%; margin: 0 auto; }
header { height: 68px; background: #318b8b; text-align: center; }
h1 { margin: 0; padding-top: 15px; font-size: 32px; line-height: 37px; color: #f5deb3; }
.search { display: flex; align-items: center; gap: 4px; height: 51px; padding-left: 16px; }
input { width: 173px; height: 19px; padding: 1px; border: 1px solid #767676; border-radius: 2.500px; background: #e8f0fe; font: 13.333px "Liberation Sans", sans-serif; color: #000; }
.actions { display: flex; gap: 31px; margin: 13px 0 29px 14px; }
button { height: 46px; padding: 0 13px; border: 2px solid #0c3535; border-radius: 5px; background: #318b8b; color: #f5deb3; font: 13.333px "Liberation Sans", sans-serif; }
.forecast { height: 499px; border: 2px solid #000; border-radius: 5px; }
h2 { margin: 15px 0 16px; font-size: 24px; line-height: 28px; text-align: center; }
.cards { display: flex; align-items: center; gap: 224px; padding-left: 127.500px; }
.card { width: 335px; height: 410px; flex: none; padding-top: 16px; border: 2px solid #000; border-radius: 5px; background: #dcf8f9; text-align: center; }
.today { width: 336px; height: 412px; border-width: 3px; background: #8ab5b5; }
h3 { margin: 0 0 19px; font-size: 18.720px; line-height: 21px; }
p { margin: 0 0 16px; }
.rule { width: 144px; height: 1px; margin: 0 auto; background: #000; }
.hour { display: flex; flex-direction: column; align-items: center; height: 140px; padding-top: 19px; }
.hour span { margin: 4px 0 16px; }
.icon { flex: none; width: 64px; height: 64px; }
.hour strong { height: 18px; }
.moon { fill: #e6fbff; stroke: #2f74cc; stroke-width: 2.900; stroke-linejoin: round; }
.cloud { fill: #fff; stroke: #d0d1d2; stroke-width: 2.800; }
.map { position: relative; height: 400px; margin-top: 34px; overflow: hidden; font-family: "Liberation Sans", sans-serif; }
.streets { display: block; width: 100%; height: 170px; }
.line path { fill: none; stroke-linejoin: round; }
.line path[fill] { fill: #3d423c; }
.labels text { font-family: "Noto Sans", sans-serif; text-anchor: middle; fill: #1c1c1c; stroke: rgba(255, 255, 255, .75); stroke-width: 5px; stroke-linejoin: round; paint-order: stroke; }
.labels .place { fill: #3e3e3e; }
.labels .metro { fill: #5059b4; font-weight: 700; }
.labels .park { fill: #2f6b3a; font-style: italic; }
.labels .grey { fill: #6c6c6c; }
.labels .district { fill: #80605a; }
.labels.curved text { text-anchor: start; }
.zoom { position: absolute; left: 10px; top: 10px; display: flex; flex-direction: column; width: 34px; height: 65px; border: 2px solid rgba(0, 0, 0, .2); border-radius: 4px; background: #fff; background-clip: padding-box; font: bold 22px/33px "Liberation Mono", monospace; text-align: center; }
.zoom span { height: 30px; }
.zoom span + span { height: 31px; border-top: 1px solid #ccc; }
.pin { position: absolute; left: 701px; top: 93px; width: 25px; height: 41px; overflow: visible; }
.popup { position: absolute; left: 644px; top: 25px; width: 139px; height: 61px; padding: 13px 0 0 21px; border-radius: 12px; background: #fff; color: #333; font-size: 13px; line-height: 16px; white-space: nowrap; box-shadow: 0 3px 14px rgba(0, 0, 0, .4); }
.popup::after { content: ""; position: absolute; left: 60px; top: 60px; border: 10px solid transparent; border-top-color: #fff; border-bottom: 0; }
.close { position: absolute; right: 7px; top: 1px; color: #757575; font-size: 16px; line-height: 24px; }
.scrollbar { display: flex; flex-direction: column; align-items: center; width: 14px; height: 910px; padding: 4px 0 4px 1px; background: #2c2c2c; }
.scrollbar svg { width: 9px; height: 7px; fill: #a0a0a0; stroke: #a0a0a0; stroke-linejoin: round; }
.thumb { width: 9px; height: 624px; margin-top: 6px; border-radius: 5px; background: #9f9f9f; }
.scrollbar .down { margin-top: auto; }
</style>
